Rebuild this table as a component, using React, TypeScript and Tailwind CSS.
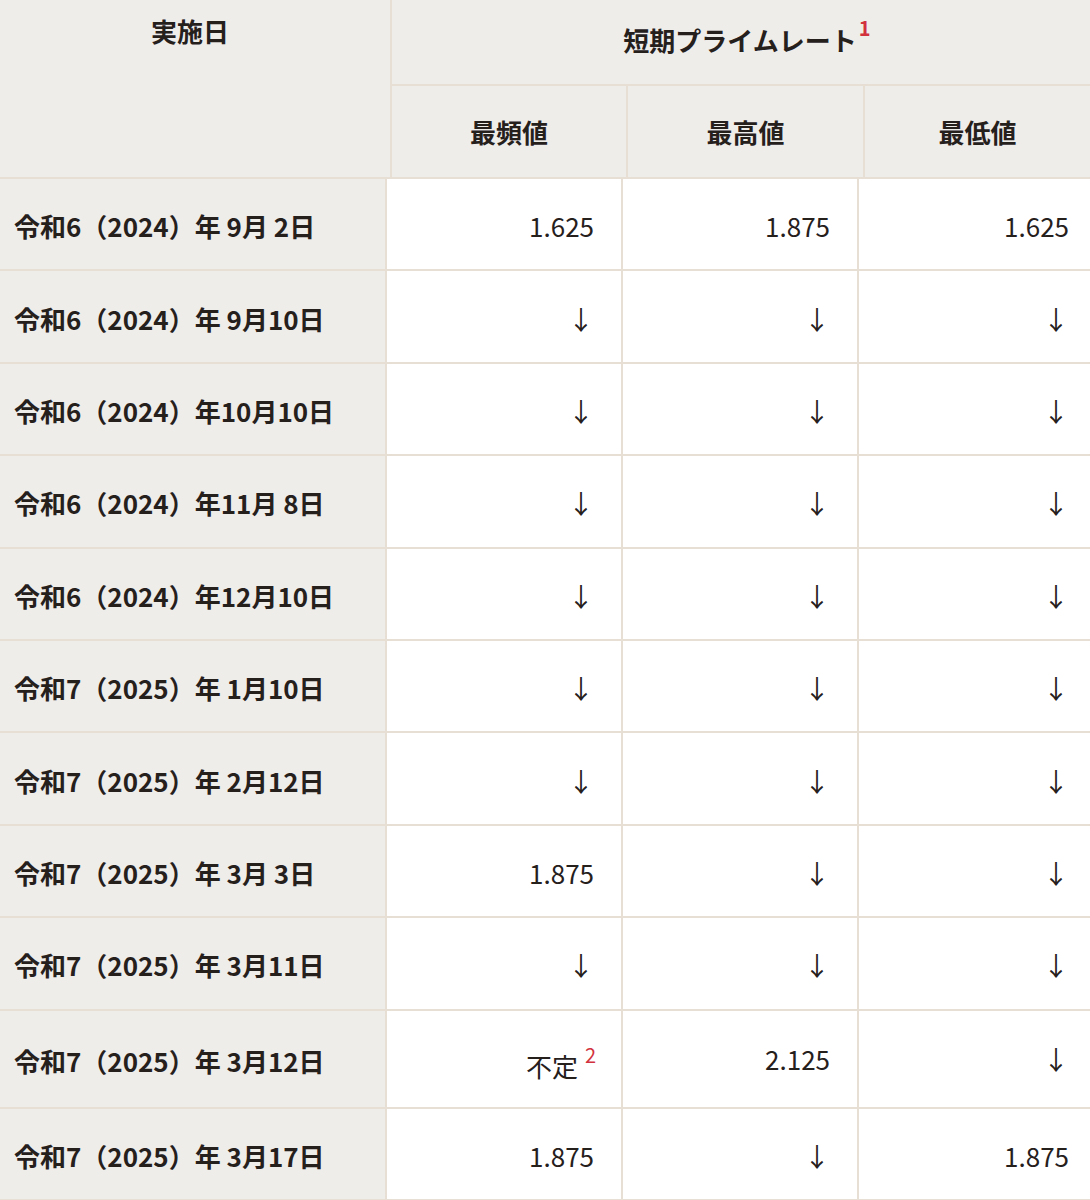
import React from "react";

type Cell = { v: string; sup?: string };
type Row = { date: string; cells: Cell[]; tall?: boolean };

const A: Cell = { v: "↓" };

const rows: Row[] = [
  { date: "令和6（2024）年 9月 2日", cells: [{ v: "1.625" }, { v: "1.875" }, { v: "1.625" }] },
  { date: "令和6（2024）年 9月10日", cells: [A, A, A] },
  { date: "令和6（2024）年10月10日", cells: [A, A, A] },
  { date: "令和6（2024）年11月 8日", cells: [A, A, A] },
  { date: "令和6（2024）年12月10日", cells: [A, A, A] },
  { date: "令和7（2025）年 1月10日", cells: [A, A, A] },
  { date: "令和7（2025）年 2月12日", cells: [A, A, A] },
  { date: "令和7（2025）年 3月 3日", cells: [{ v: "1.875" }, A, A] },
  { date: "令和7（2025）年 3月11日", cells: [A, A, A] },
  { date: "令和7（2025）年 3月12日", cells: [{ v: "不定", sup: "2" }, { v: "2.125" }, A], tall: true },
  { date: "令和7（2025）年 3月17日", cells: [{ v: "1.875" }, A, { v: "1.875" }] },
];

const font = { fontFamily: '"Noto Sans CJK JP", "Noto Sans", sans-serif' };

export default function App() {
  return (
    <div className="w-[1090px] h-[1200px] overflow-hidden bg-white text-[#26201d]" style={font}>
      <div className="w-[1096px]">
        {/* Header */}
        <div className="flex h-[179px] bg-[#efede9] border-b-2 border-[#e7dfd4]">
          <div className="w-[392px] shrink-0 border-r-2 border-[#e7dfd4] flex justify-center pt-[15px]">
            <span className="text-[26px] font-bold leading-[32px] pr-[10px]">実施日</span>
          </div>
          <div className="flex-1 flex flex-col">
            <div className="h-[86px] border-b-2 border-[#e7dfd4] flex items-center justify-center">
              <span className="text-[26px] font-bold leading-[32px] pl-[6px] relative top-[-2px] flex items-start">
                短期プライムレート
                <span className="text-[20px] leading-[20px] text-[#d2323d] font-bold relative top-[-6px] ml-[2px]">1</span>
              </span>
            </div>
            <div className="flex-1 flex">
              <div className="w-[236px] border-r-2 border-[#e7dfd4] flex items-center justify-center">
                <span className="text-[26px] font-bold leading-[32px]">最頻値</span>
              </div>
              <div className="w-[237px] border-r-2 border-[#e7dfd4] flex items-center justify-center">
                <span className="text-[26px] font-bold leading-[32px]">最高値</span>
              </div>
              <div className="flex-1 flex items-center justify-center pr-[6px]">
                <span className="text-[26px] font-bold leading-[32px]">最低値</span>
              </div>
            </div>
          </div>
        </div>
        {/* Body */}
        {rows.map((r, i) => (
          <div
            key={i}
            className={`flex border-b-2 border-[#e7dfd4] ${r.tall ? "h-[98px]" : "h-[92.4px]"}`}
          >
            <div className="w-[387px] shrink-0 bg-[#efede9] border-r-2 border-[#e7dfd4] flex items-center pl-[14px] pt-[4px]">
              <span className="text-[26px] font-bold leading-[32px] whitespace-pre">{r.date}</span>
            </div>
            {r.cells.map((c, j) => (
              <div
                key={j}
                className={`${j < 2 ? "w-[236px] border-r-2 border-[#e7dfd4]" : "flex-1"} flex items-center justify-end ${c.sup ? "pt-[14px] pr-[25px]" : r.tall ? "pt-0 pr-[27px]" : "pt-[4px] pr-[27px]"}`}
              >
                {c.sup ? (
                  <span className="text-[26px] leading-[32px] flex items-start">
                    {c.v}
                    <span className="text-[20px] leading-[20px] text-[#d2323d] relative top-[-5px] ml-[7px]">{c.sup}</span>
                  </span>
                ) : (
                  <span className="text-[26px] leading-[32px]">{c.v}</span>
                )}
              </div>
            ))}
          </div>
        ))}
      </div>
    </div>
  );
}
